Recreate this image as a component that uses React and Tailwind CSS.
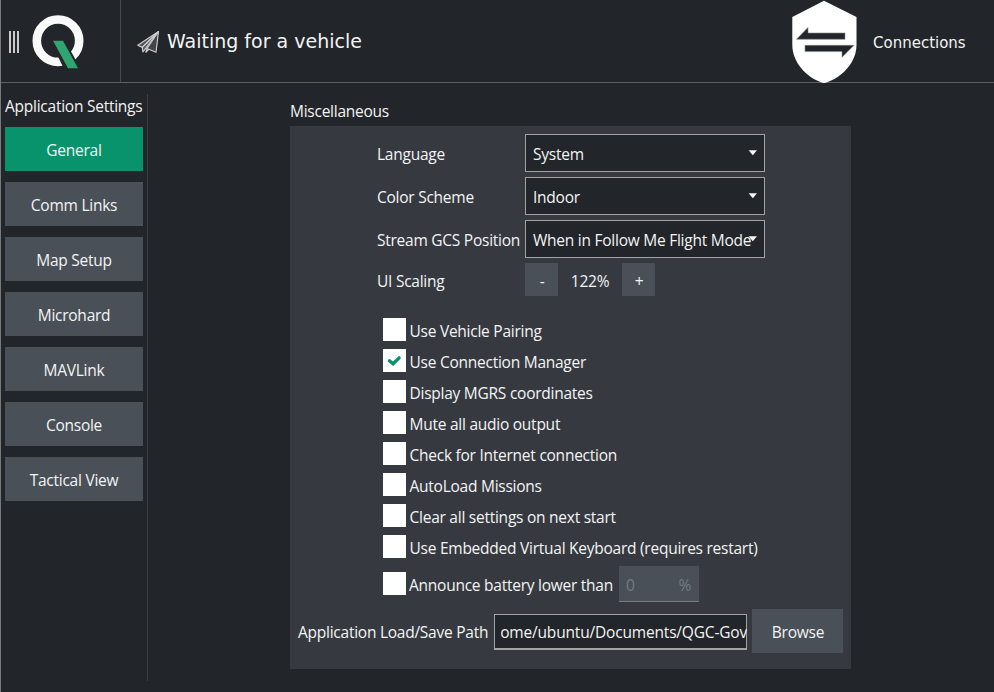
const NAV = ['General', 'Comm Links', 'Map Setup', 'Microhard', 'MAVLink', 'Console', 'Tactical View'];

const OPTIONS = [
  { label: 'Use Vehicle Pairing' },
  { label: 'Use Connection Manager', checked: true },
  { label: 'Display MGRS coordinates' },
  { label: 'Mute all audio output' },
  { label: 'Check for Internet connection' },
  { label: 'AutoLoad Missions' },
  { label: 'Clear all settings on next start' },
  { label: 'Use Embedded Virtual Keyboard (requires restart)' },
];

function QLogo() {
  return (
    <svg className="ml-[12px] mt-[14px] h-[56px] w-[54px] shrink-0" viewBox="31 14 54 56">
      <circle cx="58" cy="40.7" r="21.2" fill="none" stroke="#f8faf9" strokeWidth="8.6" />
      <path d="M50 40h14.500l17 30H64.500z" fill="#222529" />
      <path d="M53 40.700h10L78 68.300H68z" fill="#31a56f" />
    </svg>
  );
}

function PaperPlane() {
  return (
    <svg className="ml-[16px] mt-[30px] h-[24px] w-[24px] shrink-0" viewBox="137 30 24 24" fill="none" stroke="#c9cbcc" strokeWidth="1.2" strokeLinejoin="round">
      <path d="M158.500 31.500L137.800 45.200l4.500 2.200z" fill="#8d9092" fillOpacity=".45" />
      <path d="M158.500 31.500l-11.500 17 9 3.700z" fill="#8d9092" fillOpacity=".3" />
      <path d="M158.500 31.500L142.300 47.400l.6 4.600 2.800-3.700zM147 48.500l-1.200 3.700 3-2.900" fill="#8d9092" fillOpacity=".45" />
    </svg>
  );
}

function Shield() {
  return (
    <svg className="ml-auto h-[83px] w-[66px] shrink-0" viewBox="791 0 66 83">
      <path d="M824 .8L856.5 17v28c0 17-14 32-30 37.500q-2.500.8-5 0C806 77 792.300 62 792.300 45V17z" fill="#fff" />
      <path d="M796.500 39.300L808 27.500V33h37v6.300zM854 45.300L842 57.300V51.600h-37v-6.300z" fill="#222529" stroke="#85888a" strokeWidth=".6" />
    </svg>
  );
}

function Checkbox({ checked }) {
  return (
    <span className="flex h-[23px] w-[23px] shrink-0 items-center justify-center bg-white">
      {checked && (
        <svg className="h-[23px] w-[23px]" viewBox="0 0 23 23" fill="none">
          <path d="M6.400 11.700l3.700 3 6-5.800" stroke="#08936d" strokeWidth="3.400" strokeLinecap="round" />
        </svg>
      )}
    </span>
  );
}

function Select({ value }) {
  return (
    <div className="relative h-[38px] w-[240px] whitespace-nowrap border border-[#a3a3a3] bg-[#222529] pl-[7px] leading-[38px]">
      {value}
      <svg className="absolute right-[7px] top-[15px] h-[6px] w-[9px]" viewBox="0 0 9 6">
        <path d="M.6.2h8.400L4.800 5.300z" fill="#f4f4f4" />
      </svg>
    </div>
  );
}

function Field({ label, value }) {
  return (
    <div className="flex h-[38px]">
      <span className="w-[148px] whitespace-nowrap leading-[40px]">{label}</span>
      <Select value={value} />
    </div>
  );
}

export default function App() {
  return (
    <div className="flex h-[692px] w-[994px] flex-col overflow-hidden border-l border-[#77797b] bg-[#222529] font-['Open_Sans',sans-serif] text-[15.5px] tracking-[-0.25px] text-[#f3f4f4]">
      <header className="flex h-[83px] shrink-0 border-b border-[#5d6062] font-['DejaVu_Sans',sans-serif] tracking-normal">
        <div className="flex w-[120px] shrink-0 border-r border-[#47494d]">
          <div className="ml-[8px] mt-[31px] flex h-[22px] gap-[2px]">
            <span className="w-[2px] bg-[#c9cacb]" />
            <span className="w-[2px] bg-[#c9cacb]" />
            <span className="w-[2px] bg-[#c9cacb]" />
          </div>
          <QLogo />
        </div>
        <PaperPlane />
        <h1 className="ml-[6px] whitespace-nowrap text-[19px] leading-[83px]">Waiting for a vehicle</h1>
        <Shield />
        <span className="ml-[16px] w-[121px] shrink-0 text-[15px] leading-[86px]">Connections</span>
      </header>

      <div className="flex min-h-0 flex-1">
        <aside className="mt-[11px] h-[587px] w-[147px] shrink-0 border-r border-[#3b3e44] pl-[4px]">
          <h2 className="h-[33px] whitespace-nowrap leading-[25px]">Application Settings</h2>
          <nav className="flex w-[138px] flex-col gap-[11px]">
            {NAV.map((name) => (
              <button
                key={name}
                className={name === 'General' ? 'h-[44px] bg-[#08936d] pt-[3px]' : 'h-[44px] bg-[#4a5058] pt-[3px]'}
              >
                {name}
              </button>
            ))}
          </nav>
        </aside>

        <main className="ml-[142px] w-[561px]">
          <h2 className="h-[43px] pt-[17px] leading-[23px]">Miscellaneous</h2>
          <section className="h-[543px] bg-[#363a40] pt-[8px]">
            <div className="ml-[87px] flex flex-col gap-[5px]">
              <Field label="Language" value="System" />
              <Field label="Color Scheme" value="Indoor" />
              <Field label="Stream GCS Position" value="When in Follow Me Flight Mode" />
              <div className="flex h-[33px] leading-[36px]">
                <span className="w-[148px]">UI Scaling</span>
                <button className="w-[33px] bg-[#4a5058] pl-px">-</button>
                <span className="w-[64px] text-center">122%</span>
                <button className="w-[33px] bg-[#4a5058] pl-px">+</button>
              </div>
            </div>

            <div className="ml-[93px] mt-[22px] flex flex-col gap-[8px]">
              {OPTIONS.map((option) => (
                <label key={option.label} className="flex h-[23px] gap-[3.5px] whitespace-nowrap leading-[27px]">
                  <Checkbox checked={option.checked} />
                  {option.label}
                </label>
              ))}
            </div>

            <div className="ml-[93px] mt-[8px] flex h-[36px]">
              <div className="-mt-px flex items-center">
                <Checkbox />
              </div>
              <span className="ml-[3px] w-[210px] whitespace-nowrap leading-[38px]">Announce battery lower than</span>
              <div className="flex h-[36px] w-[80px] justify-between border-b border-[#777b80] bg-[#4a5058] pl-[7px] pr-[8px] leading-[38px] text-[#767a83]">
                <span>0</span>
                <span>%</span>
              </div>
            </div>

            <div className="ml-[8px] mt-[7px] flex h-[44px] items-center">
              <span className="w-[196px] whitespace-nowrap pt-[3px]">Application Load/Save Path</span>
              <div className="mt-[2px] h-[36px] w-[253px] border border-b-2 border-[#a3a3a3] bg-[#222529] pl-[6px]">
                <div className="-mr-px flex h-full justify-end overflow-hidden whitespace-nowrap leading-[35px] tracking-[-0.18px]">
                  <span>home/ubuntu/Documents/QGC-Gov</span>
                </div>
              </div>
              <button className="ml-[5px] h-[44px] w-[91px] bg-[#4a5058] pl-px pt-[3px]">Browse</button>
            </div>
          </section>
        </main>
      </div>
    </div>
  );
}
